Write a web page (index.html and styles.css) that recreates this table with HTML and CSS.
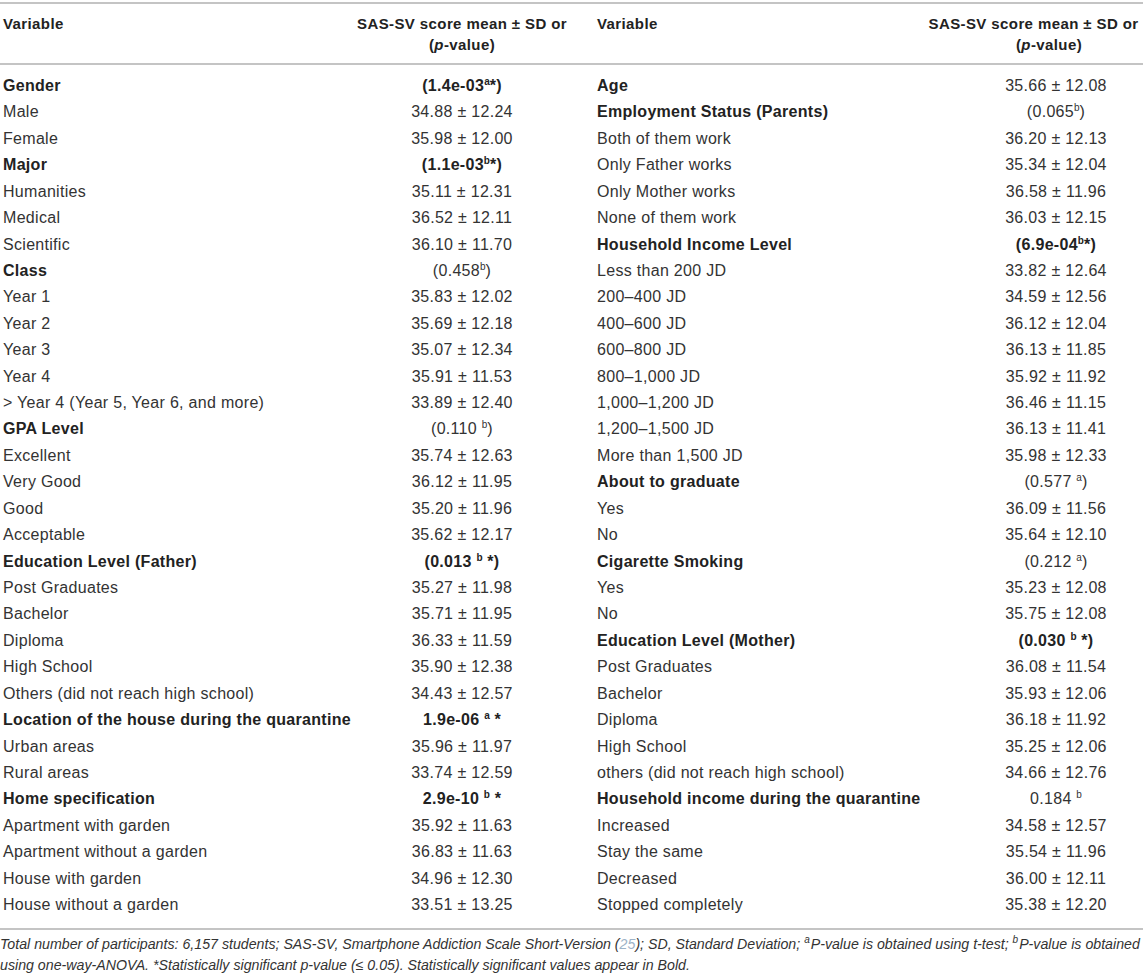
FILE: index.html
```html
<!DOCTYPE html>
<html lang="en">
<head>
<meta charset="utf-8">
<title>SAS-SV scores by variable</title>
<link rel="stylesheet" href="styles.css">
</head>
<body>
<div class="table-wrap">
<table class="data">
  <thead>
    <tr>
      <th class="var">Variable</th>
      <th class="val"><span class="h1">SAS-SV score mean ± SD or</span><span class="h2">(<i>p</i>-value)</span></th>
      <th class="var">Variable</th>
      <th class="val val-r"><span class="h1">SAS-SV score mean ± SD or</span><span class="h2">(<i>p</i>-value)</span></th>
    </tr>
  </thead>
  <tbody>
    <tr class="first"><td class="var b">Gender</td><td class="val b">(1.4e-03<sup>a</sup>*)</td><td class="var b">Age</td><td class="val">35.66 ± 12.08</td></tr>
    <tr><td class="var">Male</td><td class="val">34.88 ± 12.24</td><td class="var b">Employment Status (Parents)</td><td class="val">(0.065<sup>b</sup>)</td></tr>
    <tr><td class="var">Female</td><td class="val">35.98 ± 12.00</td><td class="var">Both of them work</td><td class="val">36.20 ± 12.13</td></tr>
    <tr><td class="var b">Major</td><td class="val b">(1.1e-03<sup>b</sup>*)</td><td class="var">Only Father works</td><td class="val">35.34 ± 12.04</td></tr>
    <tr><td class="var">Humanities</td><td class="val">35.11 ± 12.31</td><td class="var">Only Mother works</td><td class="val">36.58 ± 11.96</td></tr>
    <tr><td class="var">Medical</td><td class="val">36.52 ± 12.11</td><td class="var">None of them work</td><td class="val">36.03 ± 12.15</td></tr>
    <tr><td class="var">Scientific</td><td class="val">36.10 ± 11.70</td><td class="var b">Household Income Level</td><td class="val b">(6.9e-04<sup>b</sup>*)</td></tr>
    <tr><td class="var b">Class</td><td class="val">(0.458<sup>b</sup>)</td><td class="var">Less than 200 JD</td><td class="val">33.82 ± 12.64</td></tr>
    <tr><td class="var">Year 1</td><td class="val">35.83 ± 12.02</td><td class="var">200–400 JD</td><td class="val">34.59 ± 12.56</td></tr>
    <tr><td class="var">Year 2</td><td class="val">35.69 ± 12.18</td><td class="var">400–600 JD</td><td class="val">36.12 ± 12.04</td></tr>
    <tr><td class="var">Year 3</td><td class="val">35.07 ± 12.34</td><td class="var">600–800 JD</td><td class="val">36.13 ± 11.85</td></tr>
    <tr><td class="var">Year 4</td><td class="val">35.91 ± 11.53</td><td class="var">800–1,000 JD</td><td class="val">35.92 ± 11.92</td></tr>
    <tr><td class="var">&gt; Year 4 (Year 5, Year 6, and more)</td><td class="val">33.89 ± 12.40</td><td class="var">1,000–1,200 JD</td><td class="val">36.46 ± 11.15</td></tr>
    <tr><td class="var b">GPA Level</td><td class="val">(0.110 <sup>b</sup>)</td><td class="var">1,200–1,500 JD</td><td class="val">36.13 ± 11.41</td></tr>
    <tr><td class="var">Excellent</td><td class="val">35.74 ± 12.63</td><td class="var">More than 1,500 JD</td><td class="val">35.98 ± 12.33</td></tr>
    <tr><td class="var">Very Good</td><td class="val">36.12 ± 11.95</td><td class="var b">About to graduate</td><td class="val">(0.577 <sup>a</sup>)</td></tr>
    <tr><td class="var">Good</td><td class="val">35.20 ± 11.96</td><td class="var">Yes</td><td class="val">36.09 ± 11.56</td></tr>
    <tr><td class="var">Acceptable</td><td class="val">35.62 ± 12.17</td><td class="var">No</td><td class="val">35.64 ± 12.10</td></tr>
    <tr><td class="var b">Education Level (Father)</td><td class="val b">(0.013 <sup>b</sup> *)</td><td class="var b">Cigarette Smoking</td><td class="val">(0.212 <sup>a</sup>)</td></tr>
    <tr><td class="var">Post Graduates</td><td class="val">35.27 ± 11.98</td><td class="var">Yes</td><td class="val">35.23 ± 12.08</td></tr>
    <tr><td class="var">Bachelor</td><td class="val">35.71 ± 11.95</td><td class="var">No</td><td class="val">35.75 ± 12.08</td></tr>
    <tr><td class="var">Diploma</td><td class="val">36.33 ± 11.59</td><td class="var b">Education Level (Mother)</td><td class="val b">(0.030 <sup>b</sup> *)</td></tr>
    <tr><td class="var">High School</td><td class="val">35.90 ± 12.38</td><td class="var">Post Graduates</td><td class="val">36.08 ± 11.54</td></tr>
    <tr><td class="var">Others (did not reach high school)</td><td class="val">34.43 ± 12.57</td><td class="var">Bachelor</td><td class="val">35.93 ± 12.06</td></tr>
    <tr><td class="var b">Location of the house during the quarantine</td><td class="val b">1.9e-06 <sup>a</sup> *</td><td class="var">Diploma</td><td class="val">36.18 ± 11.92</td></tr>
    <tr><td class="var">Urban areas</td><td class="val">35.96 ± 11.97</td><td class="var">High School</td><td class="val">35.25 ± 12.06</td></tr>
    <tr><td class="var">Rural areas</td><td class="val">33.74 ± 12.59</td><td class="var">others (did not reach high school)</td><td class="val">34.66 ± 12.76</td></tr>
    <tr><td class="var b">Home specification</td><td class="val b">2.9e-10 <sup>b</sup> *</td><td class="var b">Household income during the quarantine</td><td class="val">0.184 <sup>b</sup></td></tr>
    <tr><td class="var">Apartment with garden</td><td class="val">35.92 ± 11.63</td><td class="var">Increased</td><td class="val">34.58 ± 12.57</td></tr>
    <tr><td class="var">Apartment without a garden</td><td class="val">36.83 ± 11.63</td><td class="var">Stay the same</td><td class="val">35.54 ± 11.96</td></tr>
    <tr><td class="var">House with garden</td><td class="val">34.96 ± 12.30</td><td class="var">Decreased</td><td class="val">36.00 ± 12.11</td></tr>
    <tr class="last"><td class="var">House without a garden</td><td class="val">33.51 ± 13.25</td><td class="var">Stopped completely</td><td class="val">35.38 ± 12.20</td></tr>
  </tbody>
</table>
</div>
<p class="note">Total number of participants: 6,157 students; SAS-SV, Smartphone Addiction Scale Short-Version (<span class="ref">25</span>); SD, Standard Deviation; <sup>a</sup>P-value is obtained using t-test; <sup>b</sup>P-value is obtained using one-way-ANOVA. *Statistically significant p-value (≤ 0.05). Statistically significant values appear in Bold.</p>
</body>
</html>
```

FILE: styles.css
```css
html, body {
  margin: 0;
  padding: 0;
  background: #ffffff;
  overflow: hidden;
}

body {
  font-family: "Liberation Sans", Arial, Helvetica, sans-serif;
  font-size: 16px;
  color: #333333;
}

.table-wrap {
  width: 1143px;
  overflow: hidden;
  padding-top: 2px;
}

.data {
  width: 1188px;
  border-collapse: collapse;
  table-layout: fixed;
  border-top: 2px solid #c4c4c4;
  border-bottom: 2px solid #c4c4c4;
}

.data th,
.data td {
  padding: 0 0 0 3px;
  white-space: nowrap;
  letter-spacing: 0.3px;
}

.data th.var,
.data td.var {
  text-align: left;
}

.data th:nth-child(1) { width: 327px; }
.data th:nth-child(2) { width: 264px; }
.data th:nth-child(3) { width: 327px; }
.data th:nth-child(4) { width: 264px; }

.data td.val,
.data th.val {
  text-align: center;
  padding-left: 0;
}

.data thead th {
  font-weight: bold;
  font-size: 15px;
  letter-spacing: 0.4px;
  color: #222222;
  line-height: 21px;
  padding-top: 9px;
  padding-bottom: 8px;
  vertical-align: top;
  border-bottom: 2px solid #c4c4c4;
}

.data thead .h1,
.data thead .h2 {
  display: block;
}

.data thead .val-r .h1 {
  margin-right: 45px;
}

.data thead .val-r .h2 {
  margin-right: 14px;
}

.data tbody td {
  line-height: 26.42px;
}

.data tbody tr.first td {
  padding-top: 8px;
}

.data tbody tr.last td {
  padding-bottom: 9px;
}

.data .b {
  font-weight: bold;
  color: #222222;
}

sup {
  font-size: 10px;
  line-height: 0;
  vertical-align: super;
  letter-spacing: 0;
}

.note {
  width: 1143px;
  margin: 0;
  padding-top: 4px;
  font-style: italic;
  font-size: 14.2px;
  line-height: 21px;
  color: #333333;
}

.note sup {
  margin-right: 1px;
}

.note .ref {
  color: #9db3c8;
}
```
